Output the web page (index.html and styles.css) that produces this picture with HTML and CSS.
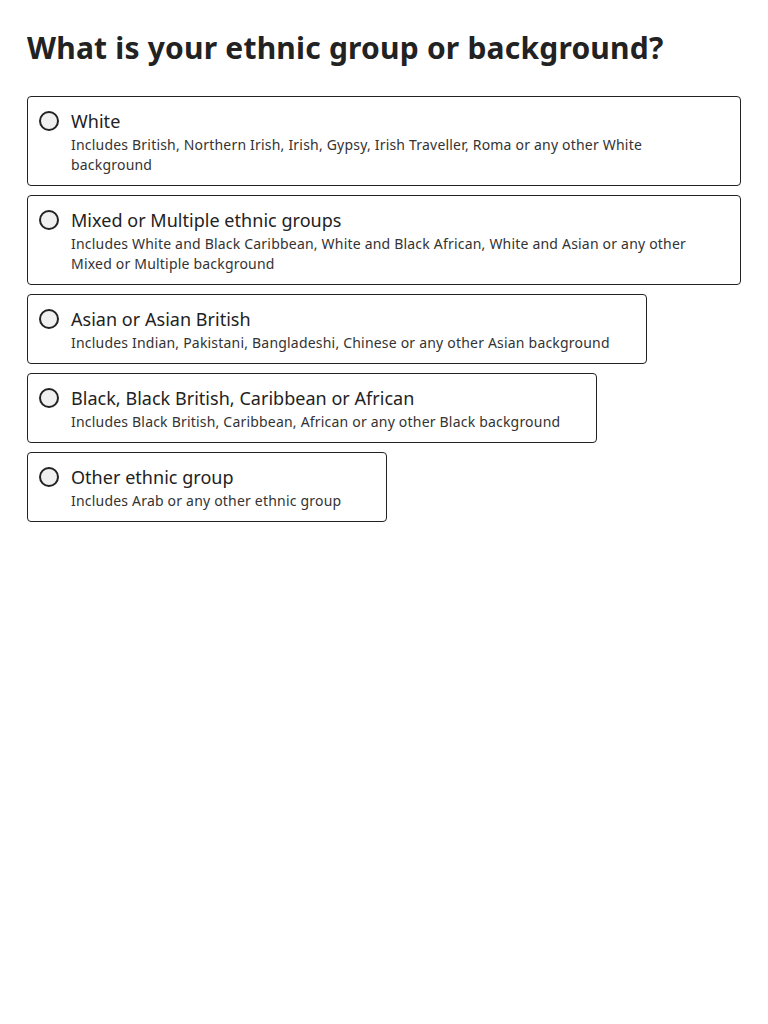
FILE: index.html
```html
<!DOCTYPE html>
<html lang="en">
<head>
<meta charset="utf-8">
<title>Ethnic group</title>
<link rel="stylesheet" href="styles.css">
</head>
<body>
<main class="page">
  <h1 class="title">What is your ethnic group or background?</h1>
  <div class="options">
    <label class="option">
      <span class="radio"></span>
      <span class="text">
        <span class="label">White</span>
        <span class="hint">Includes British, Northern Irish, Irish, Gypsy, Irish Traveller, Roma or any other White background</span>
      </span>
    </label>
    <label class="option">
      <span class="radio"></span>
      <span class="text">
        <span class="label">Mixed or Multiple ethnic groups</span>
        <span class="hint">Includes White and Black Caribbean, White and Black African, White and Asian or any other Mixed or Multiple background</span>
      </span>
    </label>
    <label class="option">
      <span class="radio"></span>
      <span class="text">
        <span class="label">Asian or Asian British</span>
        <span class="hint">Includes Indian, Pakistani, Bangladeshi, Chinese or any other Asian background</span>
      </span>
    </label>
    <label class="option">
      <span class="radio"></span>
      <span class="text">
        <span class="label">Black, Black British, Caribbean or African</span>
        <span class="hint">Includes Black British, Caribbean, African or any other Black background</span>
      </span>
    </label>
    <label class="option">
      <span class="radio"></span>
      <span class="text">
        <span class="label">Other ethnic group</span>
        <span class="hint">Includes Arab or any other ethnic group</span>
      </span>
    </label>
  </div>
</main>
</body>
</html>
```

FILE: styles.css
```css
html, body {
  margin: 0;
  padding: 0;
  background: #fff;
}
body {
  font-family: "Noto Sans", "Open Sans", sans-serif;
  color: #222;
}
.page {
  padding: 28px 27px;
}
.title {
  margin: 0 0 28px;
  font-size: 30px;
  line-height: 40px;
  font-weight: 700;
  letter-spacing: 0.2px;
  color: #222;
}
.options {
  display: flex;
  flex-direction: column;
  align-items: flex-start;
  gap: 9px;
}
.option {
  display: flex;
  align-items: flex-start;
  gap: 12px;
  box-sizing: border-box;
  min-width: 360px;
  max-width: 100%;
  border: 1px solid #222;
  border-radius: 4px;
  padding: 12px 36px 10px 11px;
  cursor: pointer;
}
.radio {
  flex: none;
  box-sizing: border-box;
  width: 20px;
  height: 20px;
  margin-top: 2px;
  border: 2px solid #222;
  border-radius: 50%;
  background: #f0f0f0;
}
.text {
  display: flex;
  flex-direction: column;
  gap: 2px;
}
.label {
  font-size: 18px;
  line-height: 24px;
  letter-spacing: 0.03px;
  color: #222;
}
.hint {
  font-size: 14px;
  line-height: 20px;
  letter-spacing: 0.2px;
  color: #333;
}
```
